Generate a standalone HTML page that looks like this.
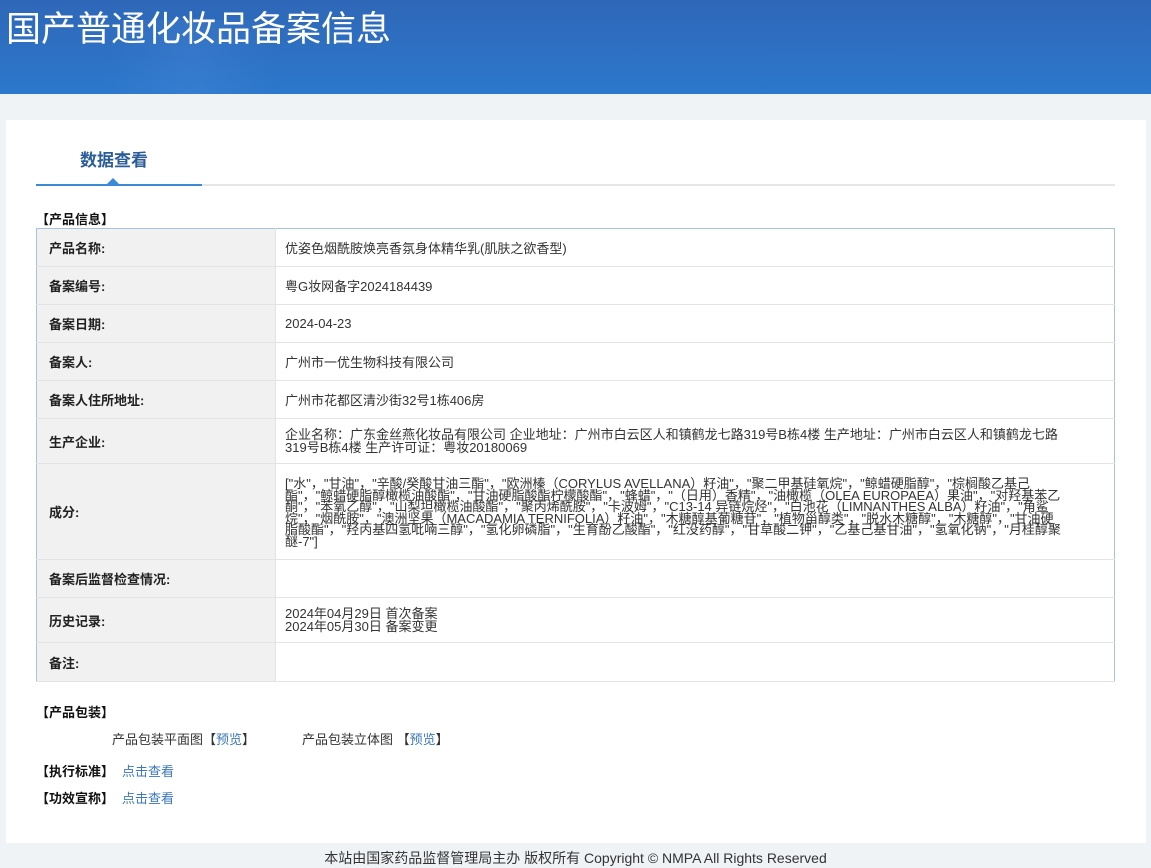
<!DOCTYPE html>
<html><head><meta charset="utf-8">
<style>
*{margin:0;padding:0;box-sizing:border-box}
body{width:1151px;height:868px;background:#eff3f6;font-family:"Liberation Sans","Noto Sans CJK SC",sans-serif;font-size:13px;color:#333;position:relative;overflow:hidden}
.hd{position:absolute;left:0;top:0;width:1151px;height:94px;background:linear-gradient(180deg,#2f67b8 0%,#2c78cc 100%)}
.hd .glow{position:absolute;left:105px;top:20px;width:170px;height:74px;background:linear-gradient(90deg,rgba(90,150,230,0),rgba(90,150,230,.18),rgba(90,150,230,0))}
.hd h1{position:absolute;left:6px;top:1px;font-size:35px;font-weight:normal;color:#fff;font-family:"Liberation Sans","Noto Sans CJK SC",sans-serif;letter-spacing:0}
.panel{position:absolute;left:6px;top:120px;width:1140px;height:723px;background:#fff}
.tab{position:absolute;left:80px;top:146px;font-size:17px;font-weight:bold;color:#2a5c9a}
.line{position:absolute;left:36px;top:184px;width:1079px;height:2px;background:#e6e6e6}
.bl{position:absolute;left:36px;top:184px;width:166px;height:2px;background:#3a8ad6}
.tri{position:absolute;left:107px;top:178px;width:0;height:0;border-left:6px solid transparent;border-right:6px solid transparent;border-bottom:6px solid #3a8ad6}
.sec{position:absolute;font-size:13px;font-weight:bold;color:#111}
table{position:absolute;left:36px;top:228px;width:1079px;border-collapse:collapse;border:1px solid #a9c2dc}
td{border-bottom:1px solid #e3e3e3;vertical-align:middle;font-size:13px}
td.l{width:239px;background:#f1f1f1;font-weight:bold;padding-left:12px;color:#222;border-right:1px solid #e3e3e3}
td.v{padding-left:9px;padding-right:48px;color:#333}
.tight{line-height:11.5px;padding-top:2px}
a{color:#3b78b8;text-decoration:none}
.ft{position:absolute;left:0;width:1151px;top:848px;text-align:center;font-size:14px;color:#333}
</style></head><body>
<div class="hd"><div class="glow"></div><h1>国产普通化妆品备案信息</h1></div>
<div class="panel"></div>
<div class="tab">数据查看</div>
<div class="line"></div><div class="bl"></div><div class="tri"></div>
<div class="sec" style="left:36px;top:209px">【产品信息】</div>
<table>
<tr style="height:38px"><td class="l">产品名称:</td><td class="v">优姿色烟酰胺焕亮香氛身体精华乳(肌肤之欲香型)</td></tr>
<tr style="height:38px"><td class="l">备案编号:</td><td class="v">粤G妆网备字2024184439</td></tr>
<tr style="height:38px"><td class="l">备案日期:</td><td class="v">2024-04-23</td></tr>
<tr style="height:38px"><td class="l">备案人:</td><td class="v">广州市一优生物科技有限公司</td></tr>
<tr style="height:38px"><td class="l">备案人住所地址:</td><td class="v">广州市花都区清沙街32号1栋406房</td></tr>
<tr style="height:45px"><td class="l">生产企业:</td><td class="v" style="line-height:13px">企业名称：广东金丝燕化妆品有限公司 企业地址：广州市白云区人和镇鹤龙七路319号B栋4楼 生产地址：广州市白云区人和镇鹤龙七路319号B栋4楼 生产许可证：粤妆20180069</td></tr>
<tr style="height:96px"><td class="l">成分:</td><td class="v tight">["水"，"甘油"，"辛酸/癸酸甘油三酯"，"欧洲榛（CORYLUS AVELLANA）籽油"，"聚二甲基硅氧烷"，"鲸蜡硬脂醇"，"棕榈酸乙基己酯"，"鲸蜡硬脂醇橄榄油酸酯"，"甘油硬脂酸酯柠檬酸酯"，"蜂蜡"，"（日用）香精"，"油橄榄（OLEA EUROPAEA）果油"，"对羟基苯乙酮"，"苯氧乙醇"，"山梨坦橄榄油酸酯"，"聚丙烯酰胺"，"卡波姆"，"C13-14 异链烷烃"，"白池花（LIMNANTHES ALBA）籽油"，"角鲨烷"，"烟酰胺"，"澳洲坚果（MACADAMIA TERNIFOLIA）籽油"，"木糖醇基葡糖苷"，"植物甾醇类"，"脱水木糖醇"，"木糖醇"，"甘油硬脂酸酯"，"羟丙基四氢吡喃三醇"，"氢化卵磷脂"，"生育酚乙酸酯"，"红没药醇"，"甘草酸二钾"，"乙基己基甘油"，"氢氧化钠"，"月桂醇聚醚-7"]</td></tr>
<tr style="height:38px"><td class="l">备案后监督检查情况:</td><td class="v"></td></tr>
<tr style="height:45px"><td class="l">历史记录:</td><td class="v" style="line-height:13px">2024年04月29日 首次备案<br>2024年05月30日 备案变更</td></tr>
<tr style="height:39px"><td class="l">备注:</td><td class="v"></td></tr>
</table>
<div class="sec" style="left:36px;top:702px">【产品包装】</div>
<div style="position:absolute;left:112px;top:729px">产品包装平面图【<a>预览</a>】</div>
<div style="position:absolute;left:302px;top:729px">产品包装立体图 【<a>预览</a>】</div>
<div style="position:absolute;left:36px;top:761px"><b style="color:#111">【执行标准】</b><a style="margin-left:8px">点击查看</a></div>
<div style="position:absolute;left:36px;top:788px"><b style="color:#111">【功效宣称】</b><a style="margin-left:8px">点击查看</a></div>
<div class="ft">本站由国家药品监督管理局主办 版权所有 Copyright © NMPA All Rights Reserved</div>
</body></html>
